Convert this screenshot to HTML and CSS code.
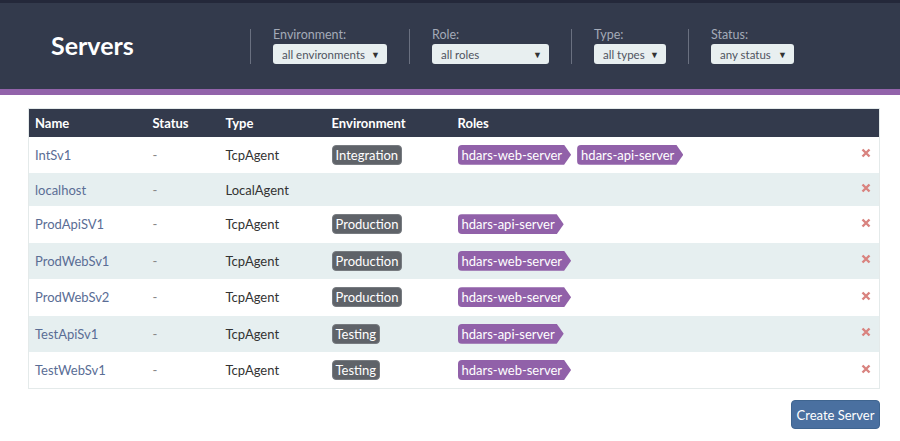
FILE: index.html
```html
<!DOCTYPE html>
<html>
<head>
<meta charset="utf-8">
<link rel="stylesheet" href="styles.css">
</head>
<body>
<header class="topbar">
  <h1 class="title">Servers</h1>
  <div class="filter">
    <label class="filter-label">Environment:</label>
    <div class="select sel-env"><span>all environments</span><span class="caret">▼</span></div>
  </div>
  <div class="filter">
    <label class="filter-label">Role:</label>
    <div class="select sel-role"><span>all roles</span><span class="caret">▼</span></div>
  </div>
  <div class="filter">
    <label class="filter-label">Type:</label>
    <div class="select sel-type"><span>all types</span><span class="caret">▼</span></div>
  </div>
  <div class="filter">
    <label class="filter-label">Status:</label>
    <div class="select sel-status"><span>any status</span><span class="caret">▼</span></div>
  </div>
</header>
<main class="content">
  <table class="servers">
    <colgroup>
      <col class="c-name"><col class="c-status"><col class="c-type"><col class="c-env"><col class="c-roles"><col class="c-del">
    </colgroup>
    <thead>
      <tr><th>Name</th><th>Status</th><th>Type</th><th>Environment</th><th>Roles</th><th></th></tr>
    </thead>
    <tbody>
      <tr><td class="name">IntSv1</td><td class="status">-</td><td>TcpAgent</td><td><span class="env">Integration</span></td><td><span class="tag">hdars-web-server</span><span class="tag">hdars-api-server</span></td><td class="del"><svg viewBox="0 0 10 10" width="10" height="10"><path d="M1.5 1.5 L8.5 8.5 M8.5 1.5 L1.5 8.5"/></svg></td></tr>
      <tr class="empty"><td class="name">localhost</td><td class="status">-</td><td>LocalAgent</td><td></td><td></td><td class="del"><svg viewBox="0 0 10 10" width="10" height="10"><path d="M1.5 1.5 L8.5 8.5 M8.5 1.5 L1.5 8.5"/></svg></td></tr>
      <tr><td class="name">ProdApiSV1</td><td class="status">-</td><td>TcpAgent</td><td><span class="env">Production</span></td><td><span class="tag">hdars-api-server</span></td><td class="del"><svg viewBox="0 0 10 10" width="10" height="10"><path d="M1.5 1.5 L8.5 8.5 M8.5 1.5 L1.5 8.5"/></svg></td></tr>
      <tr><td class="name">ProdWebSv1</td><td class="status">-</td><td>TcpAgent</td><td><span class="env">Production</span></td><td><span class="tag">hdars-web-server</span></td><td class="del"><svg viewBox="0 0 10 10" width="10" height="10"><path d="M1.5 1.5 L8.5 8.5 M8.5 1.5 L1.5 8.5"/></svg></td></tr>
      <tr><td class="name">ProdWebSv2</td><td class="status">-</td><td>TcpAgent</td><td><span class="env">Production</span></td><td><span class="tag">hdars-web-server</span></td><td class="del"><svg viewBox="0 0 10 10" width="10" height="10"><path d="M1.5 1.5 L8.5 8.5 M8.5 1.5 L1.5 8.5"/></svg></td></tr>
      <tr><td class="name">TestApiSv1</td><td class="status">-</td><td>TcpAgent</td><td><span class="env">Testing</span></td><td><span class="tag">hdars-api-server</span></td><td class="del"><svg viewBox="0 0 10 10" width="10" height="10"><path d="M1.5 1.5 L8.5 8.5 M8.5 1.5 L1.5 8.5"/></svg></td></tr>
      <tr><td class="name">TestWebSv1</td><td class="status">-</td><td>TcpAgent</td><td><span class="env">Testing</span></td><td><span class="tag">hdars-web-server</span></td><td class="del"><svg viewBox="0 0 10 10" width="10" height="10"><path d="M1.5 1.5 L8.5 8.5 M8.5 1.5 L1.5 8.5"/></svg></td></tr>
    </tbody>
  </table>
  <div class="actions">
    <button class="btn-create">Create Server</button>
  </div>
</main>
</body>
</html>
```
FILE: styles.css
```css
* { box-sizing: border-box; }
body {
  margin: 0;
  font-family: Lato, "Open Sans", sans-serif;
  font-size: 13px;
  color: #333;
  background: #fff;
}
.topbar {
  display: flex;
  align-items: center;
  height: 95px;
  padding-left: 51px;
  background: #333a4c;
  border-top: 3px solid #24283a;
  border-bottom: 6px solid #9263aa;
}
.title {
  margin: 0;
  width: 199px;
  color: #fff;
  font-size: 25px;
  font-weight: 700;
  padding-bottom: 2px;
}
.filter {
  display: flex;
  flex-direction: column;
  justify-content: space-between;
  height: 35px;
  padding: 0 22px 0 22px;
  border-left: 1px solid #6a7080;
  margin-top: 1px;
}
.filter-label {
  color: #a4aab8;
  font-size: 12.5px;
  line-height: 14px;
  margin-top: -1px;
}
.select {
  display: flex;
  align-items: center;
  justify-content: space-between;
  height: 20px;
  padding: 0 7px 0 9px;
  background: #e8eff0;
  border-radius: 3px;
  color: #4f5460;
  font-size: 11.5px;
}
.caret { font-size: 9px; color: #333; }
.sel-env { width: 114px; }
.sel-role { width: 117px; }
.sel-type { width: 72px; }
.sel-status { width: 83px; }

.content {
  padding: 13px 20px 0 28px;
}
.servers {
  width: 100%;
  border-collapse: collapse;
  table-layout: fixed;
  border: 1px solid #e4eaea;
}
.c-name { width: 118px; }
.c-status { width: 73px; }
.c-type { width: 106px; }
.c-env { width: 126px; }
.c-del { width: 30px; }
.servers th {
  background: #333a4c;
  color: #fff;
  font-weight: 700;
  text-align: left;
  height: 28px;
  padding: 0 6px;
}
.servers td {
  height: 36.5px;
  padding: 0 6px;
  vertical-align: middle;
}
.servers tr.empty td { height: 33px; }
.servers tbody tr:nth-child(even) td { background: #e6eff0; }
.name { color: #5a6d95; }
.status { color: #888; }
.env {
  display: inline-block;
  height: 20px;
  padding: 0 3px;
  background: #5f6369;
  color: #fff;
  border-radius: 4px;
  border: 1px solid #777b80;
  line-height: 18px;
}
.tag {
  display: inline-block;
  height: 20px;
  line-height: 20px;
  padding: 0 9px 0 4px;
  margin-right: 6px;
  background: #9161a9;
  color: #fff;
  border-radius: 4px 0 0 4px;
  clip-path: polygon(0 0, calc(100% - 7px) 0, 100% 50%, calc(100% - 7px) 100%, 0 100%);
}
.del { padding-left: 11px !important; }
.del svg { display: block; margin-top: -3px; }
.del path { stroke: #d9837f; stroke-width: 2.4; fill: none; }
.actions {
  display: flex;
  justify-content: flex-end;
  margin-top: 11px;
}
.btn-create {
  width: 89px;
  height: 29px;
  border: 1px solid #3f6590;
  border-radius: 4px;
  background: #4a70a0;
  color: #fff;
  font-family: inherit;
  font-size: 13px;
  padding: 0;
}
```
